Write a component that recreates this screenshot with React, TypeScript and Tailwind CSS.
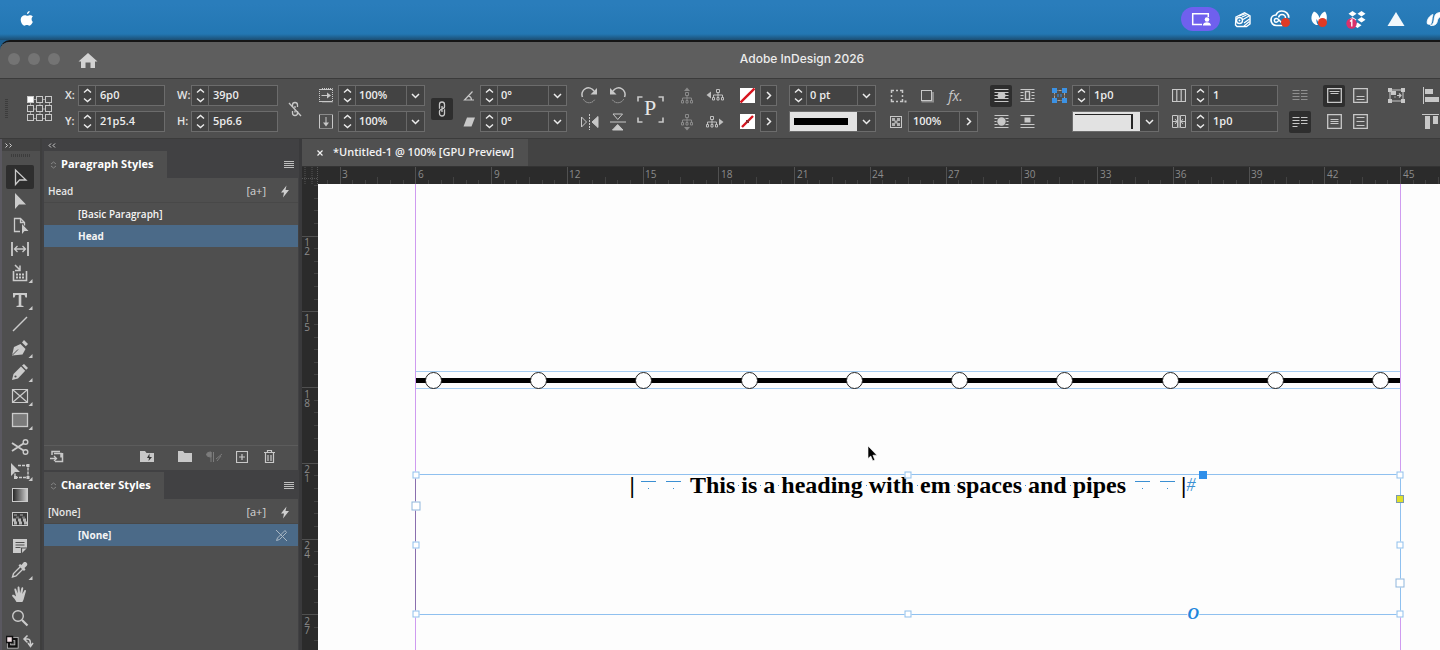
import React from "react";
import clsx from "clsx";

type Kids = { children?: React.ReactNode };

const SANS = "font-['Open_Sans','Noto_Sans',sans-serif]";
const SERIF = "font-['Liberation_Serif',serif]";

/* ---------- small building blocks ---------- */

const Glyph = ({ w, h, children, className }: Kids & { w: number; h: number; className?: string }) => (
  <svg
    width={w}
    height={h}
    viewBox={`0 0 ${w} ${h}`}
    fill="none"
    stroke="currentColor"
    className={clsx("shrink-0", className)}
    aria-hidden="true"
  >
    {children}
  </svg>
);

const IconButton = ({ label, active, className, children }: Kids & { label: string; active?: boolean; className?: string }) => (
  <button
    type="button"
    aria-label={label}
    className={clsx("flex shrink-0 items-center justify-center", active && "rounded-[2px] bg-[#2e2e2e]", className)}
  >
    {children}
  </button>
);

const Column = ({ className, children }: Kids & { className?: string }) => (
  <div className={clsx("flex shrink-0 flex-col gap-[5px]", className)}>{children}</div>
);

const Row = ({ className, children }: Kids & { className?: string }) => (
  <div className={clsx("flex h-[21px] items-center", className)}>{children}</div>
);

const Chevron = () => (
  <Glyph w={9} h={6}>
    <path d="M1 1l3.500 3.500L8 1" strokeWidth="1.500" />
  </Glyph>
);

const Stepper = ({ label }: { label: string }) => (
  <button type="button" aria-label={`Step ${label}`} className="flex w-[17px] shrink-0 items-center justify-center border-r border-[#686868]">
    <Glyph w={9} h={15}>
      <path d="M1 4.500l3.500-3 3.500 3M1 10.500l3.500 3 3.500-3" strokeWidth="1.400" />
    </Glyph>
  </button>
);

const fieldBox = "flex h-[21px] w-[87px] shrink-0 border border-[#6c6c6c] bg-[#434343] text-[11px] font-semibold text-[#ececec]";

const NumberField = ({ label, value }: { label: string; value: string }) => (
  <div className={fieldBox}>
    <Stepper label={label} />
    <input aria-label={label} defaultValue={value} className="w-0 grow bg-transparent pl-1 outline-none" />
  </div>
);

const ComboField = ({ label, value }: { label: string; value: string }) => (
  <div className={fieldBox}>
    <Stepper label={label} />
    <select aria-label={label} className="w-0 grow appearance-none bg-transparent pl-[3px] outline-none">
      <option>{value}</option>
    </select>
    <span className="flex w-[18px] shrink-0 items-center justify-center border-l border-[#686868]">
      <Chevron />
    </span>
  </div>
);

const Arrow = () => (
  <Glyph w={6} h={9}>
    <path d="M1 1l3.500 3.500L1 8" strokeWidth="1.500" />
  </Glyph>
);

/* ---------- menu bar ---------- */

const MenuBar = () => (
  <header className="flex h-10 shrink-0 items-center bg-linear-to-b from-[#2a7dbb] from-10% via-[#2377b3] via-85% to-[#1b4f74] text-white">
    <button type="button" aria-label="Apple menu" className="mb-1 ml-5">
      <svg width="14" height="17" viewBox="0 0 14 17" fill="white">
        <path d="M9.700 1c.1 1.500-1.300 3-2.700 3C6.800 2.500 8.200 1.200 9.700 1zM11.600 9c0-1.500 1.100-2.200 1.300-2.400-.8-1.200-2-1.400-2.500-1.400-1.300-.1-2.100.6-2.900.6s-1.600-.6-2.600-.6C2.800 5.300.7 6.800.7 9.600c0 2.900 2 6.100 3.700 6.100.9 0 1.300-.6 2.500-.6s1.500.6 2.500.6c1.400 0 2.900-2.200 3.500-3.900-.8-.4-1.300-1.400-1.300-2.800z" />
      </svg>
    </button>
    <div className="mb-[2px] ml-auto flex items-center">
      <button type="button" aria-label="Screen sharing" className="flex h-6 w-[39px] items-center justify-center rounded-full bg-[#6f60ee]">
        <Glyph w={20} h={15}>
          <path d="M11 12.500H1.700V1.700h15.600V5" strokeWidth="1.500" />
          <circle cx="16" cy="7.500" r="2.300" fill="white" stroke="none" />
          <path d="M11.800 13.500c0-4.500 8.200-4.500 8.200 0z" fill="white" stroke="none" />
        </Glyph>
      </button>
      <button type="button" aria-label="Radio" className="ml-[14px]">
        <Glyph w={18} h={17}>
          <path d="M2 6l8.500-4.300L16 5v8l-3.500 2.500H3L1.500 14z" strokeWidth="1.400" />
          <circle cx="5.500" cy="9.500" r="3" strokeWidth="1.400" />
          <circle cx="5.500" cy="9.500" r="1" fill="white" stroke="none" />
          <path d="M5 5l7-2.500M9 8.500L15 5M10 12l5.500-4M10 15l5.500-4.500M8 6l4.500-2" strokeWidth="1.300" />
        </Glyph>
      </button>
      <button type="button" aria-label="Creative Cloud" className="ml-[18px]">
        <Glyph w={22} h={18}>
          <path d="M6.500 15.500C3 15.500 1 13 1 10s2.200-5 5-5c1-2.500 3-4 5.800-4 4 0 7 2.800 7 6.700M6.500 15.500h6" strokeWidth="1.700" />
          <path d="M13 12.500c-2 0-3-1-4-2.500-1-1.300-2-1.800-3.200-1.500-2.200.5-1.800 3.800.4 3.700 1.300 0 2-.8 2.800-2M8.500 7.500C9 5.500 10.500 4.500 12 4.500c2 0 3.500 1.600 3.500 3.500" strokeWidth="1.500" />
          <circle cx="15.500" cy="12.500" r="4.500" fill="#e03a26" stroke="none" />
        </Glyph>
      </button>
      <button type="button" aria-label="Malwarebytes" className="ml-[18px]">
        <Glyph w={20} h={18}>
          <path
            d="M4 1.500c3 1 4.500 3.500 5.500 6.500 1-3 2.500-5.500 5.500-6.500 2.500 3 2.500 8.500 0 12.500h-3c.8-1.800.8-3.500.5-5-1 1.500-2 4-3 5.500-1-1.500-2-4-3-5.500-.3 2 0 4 1.500 6H6C0 12.500.5 5 4 1.500z"
            fill="white"
            stroke="none"
          />
          <circle cx="12.500" cy="12.500" r="4.500" fill="#e03a26" stroke="none" />
        </Glyph>
      </button>
      <button type="button" aria-label="Dropbox, 1 update" className="ml-4">
        <Glyph w={21} h={19}>
          <path d="M6.500 1l4 2.700-4 2.700-4-2.700zM15.500 1l4 2.700-4 2.700-4-2.700zM6.500 7l4 2.700-4 2.700-4-2.700zM15.500 7l4 2.700-4 2.700-4-2.700zM11.500 12.500l4 2.700-4 2.700-4-2.700z" fill="white" stroke="none" />
          <circle cx="5.500" cy="13.500" r="5.200" fill="#d9316c" stroke="none" />
          <path d="M4 11.500l1.800-1.500v6.500" strokeWidth="1.300" />
        </Glyph>
      </button>
      <button type="button" aria-label="Drive" className="ml-5">
        <Glyph w={18} h={16}>
          <path d="M9 1l8.500 14H.5z" fill="#f2f8fc" stroke="none" />
        </Glyph>
      </button>
      <button type="button" aria-label="Shortcuts" className="ml-[21px]">
        <Glyph w={14} h={16}>
          <path d="M1.500 13C0 9.500 3.500 4.500 7 3.500 5.500 7 6.500 11 4.500 13.500zM14 1.500C7 2 9 8 7.500 11.500 6.800 13 6 14 4.500 14.500 10 15 11 12 11.500 9.500c.3-2 1.500-3 2.500-3.500z" fill="white" stroke="white" strokeWidth="0.800" />
        </Glyph>
      </button>
    </div>
  </header>
);

const TitleBar = () => (
  <div className="flex h-9 shrink-0 items-center bg-[#5e5e5e] pb-[3px]">
    <div className="ml-2 flex gap-2">
      {["Close", "Minimise", "Zoom"].map((name) => (
        <button key={name} type="button" aria-label={name} className="size-3 rounded-full bg-[#747474]" />
      ))}
    </div>
    <button type="button" aria-label="Home" className="mt-1 ml-[18px] text-[#d2d2d2]">
      <Glyph w={20} h={17}>
        <path d="M10 1l9.500 8.500H17V16h-4.500v-5.500h-5V16H3V9.500H.5z" fill="currentColor" stroke="none" />
      </Glyph>
    </button>
    <h1 className="ml-[66px] grow text-center font-['Inter',sans-serif] text-[12px] font-medium text-[#ececec]">Adobe InDesign 2026</h1>
  </div>
);

/* ---------- control strip ---------- */

const ReferencePoint = () => (
  <IconButton label="Reference point" className="ml-[19px] self-center">
    <Glyph w={26} h={26}>
      <path d="M3.500 3.500h19v19h-19zM13 3v20M3 13h20" opacity="0.700" />
      {[0, 1, 2].flatMap((r) =>
        [0, 1, 2].map((c) => (
          <rect
            key={`${r}${c}`}
            x={c * 9 + 0.5}
            y={r * 9 + 0.5}
            width="6"
            height="6"
            fill={r + c === 0 ? "white" : "#4f4f4f"}
          />
        ))
      )}
    </Glyph>
  </IconButton>
);

const Tree = ({ dir }: { dir: "up" | "down" | "left" | "right" }) => {
  const vertical = dir === "up" || dir === "down";
  const head = {
    up: "M4 4l3-3.500L10 4z",
    down: "M4 14l3 3.500 3-3.500z",
    left: "M5 4.500L.5 8 5 11.500z",
    right: "M13 5.500L17.500 9 13 12.500z",
  }[dir];
  const shift = { up: "translate(0 4)", down: "translate(0 0)", left: "translate(5 1)", right: "translate(-1 2)" }[dir];
  return (
    <Glyph w={vertical ? 14 : 18} h={18} className={vertical ? "text-[#8a8a8a]" : "text-[#c0c0c0]"}>
      <g transform={shift}>
        <path d="M5.500 1.500h3v3h-3zM7 4.500v5M2.500 9V7h9v2M1.500 9.500h2v2.500h-2zM6 9.500h2v2.500H6zM10.500 9.500h2v2.500h-2z" />
      </g>
      <path d={head} fill="currentColor" stroke="none" />
    </Glyph>
  );
};

const NoneSwatch = ({ label, small }: { label: string; small?: boolean }) => (
  <Row className="gap-[5px]">
    <IconButton label={label}>
      <Glyph w={15} h={15}>
        <rect width="15" height="15" fill="white" stroke="none" />
        <path d={small ? "M2 13l11-11" : "M.5 14.500l14-14"} stroke="#d7141e" strokeWidth="2.400" />
        {small && <rect x="6" y="6" width="3" height="3" fill="#8c2a30" stroke="none" />}
      </Glyph>
    </IconButton>
    <IconButton label={`${label} options`} className="h-[21px] w-[17px] border border-[#6c6c6c] bg-[#434343] text-[#ececec]">
      <Arrow />
    </IconButton>
  </Row>
);

const ControlStrip = () => (
  <section
    aria-label="Control"
    className="flex shrink-0 overflow-hidden border-y border-[#3b3b3b] bg-[#4f4f4f] pt-[6px] pb-[5px] text-[#c8c8c8]"
  >
    <div className="ml-[5px] h-5 w-[3px] shrink-0 self-center bg-[repeating-linear-gradient(#3c3c3c_0_1px,transparent_1px_2px)]" />
    <ReferencePoint />

    <Column className="ml-3 text-[11px] font-semibold text-[#e4e4e4]">
      <Row>
        <span className="w-[13px]">X:</span>
        <NumberField label="X" value="6p0" />
      </Row>
      <Row>
        <span className="w-[13px]">Y:</span>
        <NumberField label="Y" value="21p5.4" />
      </Row>
    </Column>
    <Column className="ml-3 text-[11px] font-semibold text-[#e4e4e4]">
      <Row>
        <span className="w-[14px]">W:</span>
        <NumberField label="W" value="39p0" />
      </Row>
      <Row>
        <span className="w-[14px]">H:</span>
        <NumberField label="H" value="5p6.6" />
      </Row>
    </Column>

    <IconButton label="Constrain proportions" className="ml-[10px] self-center">
      <Glyph w={14} h={18}>
        <path d="M4.500 7V5a2.500 2.500 0 0 1 5 0v2M4.500 11v2a2.500 2.500 0 0 0 5 0v-2M7 6v2M7 10.500v2" strokeWidth="1.300" />
        <path d="M1 3l12 13" strokeWidth="1.300" />
      </Glyph>
    </IconButton>

    <Column className="ml-[17px]">
      <Row className="gap-[5px]">
        <Glyph w={14} h={15}>
          <path d="M.5 1v13M3 .5h10.500v13.500H3" strokeDasharray="1 1" />
          <path d="M.5 1.500h13M.5 13.500h13M2.500 7.500h8" />
          <path d="M8 4.500l4 3-4 3z" fill="currentColor" stroke="none" />
        </Glyph>
        <ComboField label="Scale X" value="100%" />
      </Row>
      <Row className="gap-[5px]">
        <Glyph w={14} h={15}>
          <path d="M.5 .5h13M.5 14.500h13" strokeDasharray="1 1" />
          <path d="M.5 1v13M13.500 1v13M7 3v7" />
          <path d="M4 8.500l3 4 3-4z" fill="currentColor" stroke="none" />
        </Glyph>
        <ComboField label="Scale Y" value="100%" />
      </Row>
    </Column>

    <IconButton label="Link scale" active className="ml-1.5 h-[22px] w-[22px] self-center">
      <Glyph w={10} h={16}>
        <path d="M3 7H2.500V3.500a2.500 2.500 0 0 1 5 0v2a2 2 0 0 1-2 2M7 9h.5v3.500a2.500 2.500 0 0 1-5 0v-2a2 2 0 0 1 2-2M5 5v6" strokeWidth="1.300" />
      </Glyph>
    </IconButton>

    <Column className="ml-[10px]">
      <Row className="gap-[5px]">
        <Glyph w={12} h={12}>
          <path d="M9.500 1.500L1.500 10H11M5.500 6c2 .5 3 2 3 4" strokeWidth="1.200" />
        </Glyph>
        <ComboField label="Rotation" value="0°" />
      </Row>
      <Row className="gap-[5px]">
        <Glyph w={12} h={10}>
          <path d="M4 .5h8L8.500 9.500H.5z" fill="currentColor" stroke="none" />
        </Glyph>
        <ComboField label="Shear" value="0°" />
      </Row>
    </Column>

    <Column className="ml-[14px]">
      <Row className="gap-[10px]">
        <IconButton label="Rotate 90° clockwise">
          <Glyph w={18} h={17}>
            <path d="M1.500 10a6.500 6.500 0 0 1 11.500-6" strokeWidth="1.500" />
            <path d="M2.500 12.500a6.500 6.500 0 0 0 11.500-.5" strokeDasharray="1 1" />
            <path d="M16 1v6.500H9.500z" fill="currentColor" stroke="none" />
          </Glyph>
        </IconButton>
        <IconButton label="Rotate 90° anticlockwise">
          <Glyph w={17} h={17}>
            <path d="M15.500 10A6.500 6.500 0 0 0 4 4" strokeWidth="1.500" />
            <path d="M14.500 12.500A6.500 6.500 0 0 1 3 12" strokeDasharray="1 1" />
            <path d="M1 1v6.500h6.500z" fill="currentColor" stroke="none" />
          </Glyph>
        </IconButton>
      </Row>
      <Row className="gap-[10px]">
        <IconButton label="Flip horizontal">
          <Glyph w={18} h={16}>
            <path d="M.5 3v10l5-5z" />
            <path d="M8.500 0v16" strokeDasharray="2 1" />
            <path d="M17 2.500v11L11 8z" fill="currentColor" />
          </Glyph>
        </IconButton>
        <IconButton label="Flip vertical">
          <Glyph w={17} h={18}>
            <path d="M4 1h9.500L8.800 6.500z" />
            <path d="M1 9h16" />
            <path d="M3.500 17l5.200-5.500L14 17z" fill="currentColor" />
          </Glyph>
        </IconButton>
      </Row>
    </Column>

    <IconButton label="Paragraph object" className="ml-[11px] self-center">
      <Glyph w={27} h={27}>
        <path d="M1 5.500V1h4.500M21.500 1H26v4.500M26 21.500V26h-4.500M5.500 26H1v-4.500" strokeWidth="1.600" />
        <text x="13" y="19" textAnchor="middle" fontSize="22" fill="#e6e6e6" stroke="none" fontFamily="Liberation Serif, serif">
          P
        </text>
      </Glyph>
    </IconButton>

    <Column className="ml-4">
      <Row className="gap-3">
        <Tree dir="up" />
        <Tree dir="left" />
      </Row>
      <Row className="gap-3">
        <Tree dir="down" />
        <Tree dir="right" />
      </Row>
    </Column>

    <Column className="ml-4">
      <NoneSwatch label="Fill" />
      <NoneSwatch label="Stroke" small />
    </Column>

    <Column className="ml-3">
      <ComboField label="Stroke weight" value="0 pt" />
      <button type="button" aria-label="Stroke type" className={fieldBox}>
        <span className="flex h-full grow items-center bg-[#e2e2e2] px-1">
          <span className="h-[7px] w-[54px] bg-black" />
        </span>
        <span className="flex h-full w-[18px] items-center justify-center">
          <Chevron />
        </span>
      </button>
    </Column>

    <Column className="ml-[14px]">
      <Row className="gap-[13px]">
        <IconButton label="Corner shape">
          <Glyph w={17} h={14}>
            <path d="M1.500 4V1.500H4M6 1.500h2M10 1.500h2.500V4M12.500 6v2M12.500 10v2.500H10M8 12.500H6M4 12.500H1.500V10M1.500 8V6" strokeWidth="1.500" />
            <path d="M14.500 12.500h2" strokeWidth="2" />
          </Glyph>
        </IconButton>
        <IconButton label="Drop shadow">
          <Glyph w={14} h={14}>
            <path d="M1.500 12.500h11.500V3" stroke="#8d8d8d" strokeWidth="2" />
            <rect x="1.500" y="1.500" width="10" height="10" fill="#4f4f4f" />
          </Glyph>
        </IconButton>
        <button type="button" className="w-[17px] text-[14px] leading-4 italic">
          fx.
        </button>
      </Row>
      <Row className="gap-[6px]">
        <Glyph w={12} h={12}>
          <rect x="0.500" y="0.500" width="11" height="11" />
          <path d="M2 2h3v3H2zM7 2h3v3H7zM4.500 4.500h3v3h-3zM2 7h3v3H2zM7 7h3v3H7z" fill="currentColor" stroke="none" opacity="0.800" />
        </Glyph>
        <div className="flex h-[21px] w-[70px] border border-[#6c6c6c] bg-[#434343] text-[11px] font-semibold text-[#ececec]">
          <input aria-label="Opacity" defaultValue="100%" className="w-0 grow bg-transparent pl-1 outline-none" />
          <button type="button" aria-label="Opacity slider" className="flex w-[18px] items-center justify-center border-l border-[#686868]">
            <Arrow />
          </button>
        </div>
      </Row>
    </Column>

    <Column className="ml-3">
      <Row className="gap-[8px]">
        <IconButton label="No text wrap" active className="h-[22px] w-[22px]">
          <Glyph w={15} h={14}>
            <path d="M.5 .5h14M.5 3.500h14M.5 6.500h14M.5 9.500h14M.5 12.500h14" />
            <ellipse cx="7.500" cy="6.500" rx="4" ry="3.500" fill="currentColor" stroke="none" />
          </Glyph>
        </IconButton>
        <IconButton label="Wrap around bounding box">
          <Glyph w={15} h={14}>
            <path d="M.5 .5h14M.5 3.500h3M.5 6.500h3M.5 9.500h3M.5 12.500h14M11.500 3.500h3M11.500 6.500h3M11.500 9.500h3" />
            <path d="M5.500 2.500h4v8h-4z" strokeWidth="1.400" />
          </Glyph>
        </IconButton>
      </Row>
      <Row className="gap-[8px]">
        <IconButton label="Wrap around object shape" className="w-[22px]">
          <Glyph w={15} h={14}>
            <path d="M.5 .5h14M.5 3.500h3M.5 6.500h2M.5 9.500h3M.5 12.500h14M11.500 3.500h3M12.500 6.500h2M11.500 9.500h3" />
            <circle cx="7.500" cy="6.500" r="4.200" fill="currentColor" stroke="none" />
          </Glyph>
        </IconButton>
        <IconButton label="Jump object">
          <Glyph w={15} h={14}>
            <path d="M.5 .5h14M.5 9.500h14M.5 12.500h14" />
            <path d="M4.500 2.500h6v5h-6z" fill="currentColor" stroke="none" />
          </Glyph>
        </IconButton>
      </Row>
    </Column>

    <Column className="ml-[17px] items-end">
      <Row className="gap-[5px]">
        <Glyph w={15} h={15}>
          <rect x="2.500" y="2.500" width="10" height="10" stroke="#b0a090" strokeDasharray="3 1" />
          <path d="M0 0h5v5H0zM10 0h5v5h-5zM0 10h5v5H0zM10 10h5v5h-5z" fill="#3c92e4" stroke="none" />
          <path d="M5.500 7.500h4" stroke="#3c92e4" strokeWidth="3" strokeDasharray="1 2" />
        </Glyph>
        <NumberField label="Corner size" value="1p0" />
      </Row>
      <button type="button" aria-label="Corner style" className={fieldBox}>
        <span className="h-full grow bg-[#e2e2e2] pt-[2px] pr-[7px] pl-[2px]">
          <span className="block h-[15px] border-t border-r-2 border-[#262626]" />
        </span>
        <span className="flex h-full w-[18px] items-center justify-center">
          <Chevron />
        </span>
      </button>
    </Column>

    <Column className="ml-[13px]">
      <Row className="gap-[5px]">
        <Glyph w={14} h={13}>
          <path d="M.5 .5h13v12H.5zM4.800 .5v12M9.200 .5v12" strokeWidth="1.200" />
        </Glyph>
        <NumberField label="Columns" value="1" />
      </Row>
      <Row className="gap-[5px]">
        <Glyph w={14} h={13}>
          <path d="M.5 .5h5v12h-5zM8.500 .5h5v12h-5z" />
          <path d="M1 6.500h4M9 6.500h4M7 0v13M3 4l2 2.500L3 9M11 4L9 6.500 11 9" />
        </Glyph>
        <NumberField label="Gutter" value="1p0" />
      </Row>
    </Column>

    <Column className="ml-[11px]">
      <IconButton label="Unbalanced columns" className="h-[21px] w-[22px] text-[#8f8f8f]">
        <Glyph w={16} h={11}>
          <path d="M.5 .5h7M.5 3.500h7M.5 6.500h7M.5 9.500h7M9 .5h6.500M9 3.500h6.500M9 6.500h6.500M9 9.500h6.500" />
        </Glyph>
      </IconButton>
      <IconButton label="Balance columns" active className="h-[22px] w-[22px]">
        <Glyph w={16} h={11}>
          <path d="M.5 .5h7M.5 3.500h7M.5 6.500h7M.5 9.500h5M9 .5h6.500M9 3.500h6.500M9 6.500h6.500" />
        </Glyph>
      </IconButton>
    </Column>

    <Column className="ml-3">
      <Row className="gap-[8px]">
        <IconButton label="Align top" active className="h-[22px] w-[22px]">
          <Glyph w={15} h={15}>
            <path d="M.7 .7h13.600v13.600H.7z" strokeWidth="1.300" />
            <path d="M2.500 3.500h10M3.500 5.500h8" />
          </Glyph>
        </IconButton>
        <IconButton label="Align bottom">
          <Glyph w={15} h={15}>
            <path d="M.7 .7h13.600v13.600H.7z" strokeWidth="1.300" />
            <path d="M3.500 8.500h8M3.500 11.500h8" />
          </Glyph>
        </IconButton>
      </Row>
      <Row className="gap-[8px]">
        <IconButton label="Align centre" className="w-[22px]">
          <Glyph w={15} h={15}>
            <path d="M.7 .7h13.600v13.600H.7z" strokeWidth="1.300" />
            <path d="M3.500 5.500h8M3.500 7.500h8M3.500 9.500h8" />
          </Glyph>
        </IconButton>
        <IconButton label="Justify vertically">
          <Glyph w={15} h={15}>
            <path d="M.7 .7h13.600v13.600H.7z" strokeWidth="1.300" />
            <path d="M3.500 3.500h8M3.500 7.500h8M3.500 11.500h8" />
          </Glyph>
        </IconButton>
      </Row>
    </Column>

    <Column className="ml-5">
      <IconButton label="Frame fitting" className="h-[21px]">
        <Glyph w={17} h={15}>
          <path d="M2 2h13v11H2z" />
          <path d="M0 0h4v4H0zM13 0h4v4h-4zM0 11h4v4H0zM13 11h4v4h-4zM3 3h5v4H3z" fill="currentColor" stroke="none" />
          <path d="M9 7.500h4M7 9.500v-1M11 5.500l2 2-2 2" strokeWidth="1.200" />
        </Glyph>
      </IconButton>
    </Column>
    <Column className="ml-[17px]">
      <IconButton label="Align left edges" className="h-[21px]">
        <Glyph w={17} h={17}>
          <path d="M1.500 0v17" />
          <path d="M3 2h8v5H3zM3 10h14v5H3z" fill="currentColor" stroke="none" />
        </Glyph>
      </IconButton>
      <IconButton label="Align top edges" className="h-[21px]">
        <Glyph w={17} h={17}>
          <path d="M0 1.500h17" />
          <path d="M3 3h5v13H3zM11 3h5v8h-5z" fill="currentColor" stroke="none" />
        </Glyph>
      </IconButton>
    </Column>
  </section>
);

/* ---------- toolbox ---------- */

const corner = <path d="M26.500 18v4h-4z" fill="currentColor" stroke="none" />;

const tools: { name: string; art: React.ReactNode; gap?: boolean; sub?: boolean }[] = [
  { name: "Selection", art: <path d="M9.500 5v14.500l4-4.500h6.500z" strokeWidth="1.300" /> },
  { name: "Direct selection", art: <path d="M9 4v16l4-4.500h7z" fill="currentColor" stroke="none" /> },
  {
    name: "Page",
    art: (
      <>
        <path d="M14 18.500H8.500v-13h6l4 4v3M14.500 5.500v4h4" strokeWidth="1.300" />
        <path d="M16 11v10l2.500-3h4z" fill="currentColor" stroke="none" />
      </>
    ),
  },
  {
    name: "Gap",
    art: (
      <>
        <path d="M6 5v14M22 5v14" strokeWidth="1.800" />
        <path d="M8.500 12h11M11.500 9l-3 3 3 3M16.500 9l3 3-3 3" strokeWidth="1.300" />
      </>
    ),
  },
  {
    name: "Content collector",
    sub: true,
    art: (
      <>
        <path d="M7.500 10v9.500h13V10" strokeWidth="1.600" />
        <path d="M10 13.500h8M10 16.500h8" strokeDasharray="2 1" strokeWidth="2" />
        <path d="M9 4l4.500 4.500M14 4.500v5h-5" strokeWidth="1.500" />
      </>
    ),
  },
  {
    name: "Type",
    gap: true,
    sub: true,
    art: <path d="M7 5h14v4.500h-1.500L18.500 7h-3.200v10.500l2.200.5v1h-7v-1l2.200-.5V7H9.500l-1 2.500H7z" fill="currentColor" stroke="none" />,
  },
  { name: "Line", art: <path d="M7 19L21 5" strokeWidth="1.500" /> },
  {
    name: "Pen",
    sub: true,
    art: (
      <>
        <path d="M6 19.500l2-8.500 6.500-3 5 5-3 5.500z" fill="currentColor" stroke="none" />
        <path d="M6.500 19l5.500-5.500" stroke="#4f4f4f" />
        <path d="M16 6.500l2-2.500 4 4-2.200 2.200z" fill="currentColor" stroke="none" />
      </>
    ),
  },
  {
    name: "Pencil",
    sub: true,
    art: (
      <>
        <path d="M6 20l1.500-6 7.500-7.500 4.200 4.200L12 18.500z" fill="currentColor" stroke="none" />
        <path d="M16 5.500L18 4l4 4-1.800 1.800z" fill="currentColor" stroke="none" />
        <circle cx="9.500" cy="16.500" r="1.100" fill="#4f4f4f" stroke="none" />
      </>
    ),
  },
  { name: "Rectangle frame", sub: true, art: <path d="M6.500 5.500h15v13h-15zM6.500 5.500l15 13M21.500 5.500l-15 13" strokeWidth="1.200" /> },
  { name: "Rectangle", sub: true, art: <rect x="6.500" y="5.500" width="15" height="13" fill="#7b7b7b" strokeWidth="1.300" /> },
  {
    name: "Scissors",
    gap: true,
    art: (
      <>
        <circle cx="19.500" cy="7" r="2.300" strokeWidth="1.400" />
        <circle cx="19.500" cy="17" r="2.300" strokeWidth="1.400" />
        <path d="M17.500 8.500L6 16M17.500 15.500L6 8" strokeWidth="1.900" />
      </>
    ),
  },
  {
    name: "Free transform",
    sub: true,
    art: (
      <>
        <path d="M12 6.500h10v12H9v-5" strokeDasharray="3 1" strokeWidth="1.400" />
        <path d="M20.500 5h3v3h-3zM20.500 17h3v3h-3zM8 17h3v3H8z" fill="currentColor" stroke="none" />
        <path d="M5 4v13l4-4h5z" fill="currentColor" stroke="none" />
      </>
    ),
  },
  {
    name: "Gradient swatch",
    art: (
      <>
        <linearGradient id="swatch">
          <stop offset="0" stopColor="#222" />
          <stop offset="1" stopColor="#d0d0d0" />
        </linearGradient>
        <rect x="6.500" y="5.500" width="15" height="13" fill="url(#swatch)" />
      </>
    ),
  },
  {
    name: "Gradient feather",
    art: (
      <>
        <rect x="6.500" y="5.500" width="15" height="13" fill="#3c3c3c" />
        <path d="M8 8h12M10 10.500h9" strokeDasharray="3 3" strokeWidth="2" opacity="0.400" />
        <path d="M7 13h14M8 16h13" strokeDasharray="3 2" strokeWidth="2.800" opacity="0.850" />
      </>
    ),
  },
  {
    name: "Note",
    gap: true,
    art: (
      <>
        <path d="M7 5h14v9l-5 5H7z" fill="currentColor" stroke="none" />
        <path d="M9.500 8.500h9M9.500 11h9M9.500 13.500h5M15.500 19v-5h5.500" stroke="#4f4f4f" strokeWidth="1.200" />
      </>
    ),
  },
  {
    name: "Eyedropper",
    sub: true,
    art: (
      <>
        <path d="M14.500 8.500l-7 7-1 3.500 3.500-1 7-7" strokeWidth="1.400" />
        <path d="M12.500 7.500l1.500-1.500 1.500 1 2-2.500c2-1.500 5 1 3.300 3.300L18.500 10l1 1.500-1.500 1.500z" fill="currentColor" stroke="none" />
      </>
    ),
  },
  {
    name: "Hand",
    art: (
      <path
        d="M10.500 20c-1-2.200-3-4.500-4.200-5.800-.8-1.200.8-1.900 1.800-1.100l2 1.500-1.700-6.800c-.3-1.400 1.400-1.700 1.800-.5l1.500 4.300-.1-6c0-1.400 1.800-1.400 1.900 0l.6 5.600 1.300-5.200c.4-1.300 2.100-.8 1.800.5l-.9 5.600 2-3.600c.7-1.100 2.100-.3 1.600.8-1.200 3.200-1.700 8.200-3.500 10.700z"
        fill="currentColor"
        stroke="none"
      />
    ),
  },
  {
    name: "Zoom",
    art: (
      <>
        <circle cx="12" cy="10" r="5.300" strokeWidth="1.400" />
        <path d="M16 14l5.500 5.500" strokeWidth="2.200" />
      </>
    ),
  },
  {
    name: "Default fill and stroke",
    art: (
      <>
        <rect x="3" y="9" width="7.500" height="7.500" stroke="#cbcbcb" strokeWidth="4" />
        <rect x="3" y="9" width="7.500" height="7.500" stroke="#111" strokeWidth="2.500" />
        <rect x="0.500" y="6.500" width="6" height="6" fill="#f6e4e8" stroke="#111" strokeWidth="1.500" />
        <path d="M19 9h2.500c2.500 0 3 1.500 3 6M21.500 5.500L18 9l3.500 3.500M22 13l2.500 3.500L27 13" strokeWidth="1.500" />
      </>
    ),
  },
];

const Toolbox = () => (
  <aside className="flex w-[42px] shrink-0 flex-col border-x-2 border-r-[#3e3e3e] border-l-[#5a5860] bg-[#4f4f4f]">
    <div className="flex h-3 shrink-0 items-center bg-[#434343] pl-[3px] text-[#cfcfcf]">
      <Glyph w={8} h={5}>
        <path d="M.5 .5l2 2-2 2M4.500 .5l2 2-2 2" />
      </Glyph>
    </div>
    <div className="mx-auto mt-[3px] mb-2 h-[3px] w-5 shrink-0 bg-[repeating-linear-gradient(90deg,#3c3c3c_0_1px,transparent_1px_2px)]" />
    <nav aria-label="Tools" className="flex flex-col items-center pr-[2px] text-[#cbcbcb]">
      {tools.map((t, i) => (
        <IconButton key={t.name} label={t.name} active={i === 0} className={clsx("h-6 w-7", t.gap && "mt-[3px]")}>
          <Glyph w={28} h={24}>
            {t.art}
            {t.sub && corner}
          </Glyph>
        </IconButton>
      ))}
    </nav>
  </aside>
);

/* ---------- style panels ---------- */

const PanelTabs = ({ title }: { title: string }) => (
  <div className="flex h-[27px] shrink-0 bg-[#414143]">
    <button type="button" className="flex items-center gap-1 bg-[#4f4f4f] pr-[13px] pl-[6px] text-[11px] font-bold text-white">
      <Glyph w={7} h={8} className="text-[#858585]">
        <path d="M1 3l2.500-2L6 3M1 5l2.500 2L6 5" />
      </Glyph>
      {title}
    </button>
    <IconButton label={`${title} menu`} className="mr-1 ml-auto text-[#bdbdbd]">
      <Glyph w={10} h={9}>
        <path d="M0 1.500h10M0 3.500h10M0 5.500h10M0 7.500h10" />
      </Glyph>
    </IconButton>
  </div>
);

const CurrentStyle = ({ name }: { name: string }) => (
  <div className="flex h-6 shrink-0 items-center pt-[2px] pr-2 pl-1 text-[10px] font-semibold text-[#e6e6e6]">
    <span className="grow">{name}</span>
    <button type="button" aria-label="Style override highlighter" className="text-[11px] leading-4 font-normal text-[#d6d6d6]">
      [a+]
    </button>
    <IconButton label="Quick apply" className="ml-[14px] text-[#cfcfcf]">
      <Glyph w={10} h={13}>
        <path d="M6.500.5L1 7.500h3L3 12.500 9 5H5.500z" fill="currentColor" stroke="none" />
      </Glyph>
    </IconButton>
  </div>
);

const StyleItem = ({ name, selected, children }: Kids & { name: string; selected?: boolean }) => (
  <li>
    <button
      type="button"
      className={clsx(
        "flex h-[22px] w-full items-center pr-[10px] pl-[34px] text-[10px] text-[#f4f4f4]",
        selected ? "bg-[#4b6a88] font-bold" : "font-semibold"
      )}
    >
      <span className="grow text-left">{name}</span>
      {children}
    </button>
  </li>
);

const Panels = () => (
  <aside className="flex w-[260px] shrink-0 flex-col border-r-[3px] border-[#3a3a3c] bg-[#414143] pr-px pl-[2px]">
    <div className="flex h-3 shrink-0 items-center pl-1 text-[#cfcfcf]">
      <Glyph w={8} h={5}>
        <path d="M3 .5l-2 2 2 2M7 .5l-2 2 2 2" />
      </Glyph>
    </div>
    <section aria-label="Paragraph Styles" className="flex h-[319px] shrink-0 flex-col bg-[#4f4f4f]">
      <PanelTabs title="Paragraph Styles" />
      <CurrentStyle name="Head" />
      <ul className="grow border-t border-[#484848]">
        <StyleItem name="[Basic Paragraph]" />
        <StyleItem name="Head" selected />
      </ul>
      <div className="flex h-[25px] shrink-0 items-center border-t border-[#5c5c5c] pb-[3px] pl-[6px] text-[#c8c8c8]">
        <IconButton label="Load styles">
          <Glyph w={14} h={13}>
            <path d="M2 5V1.500h8M4 3.500h7v4M5 11.500h7.500V3" strokeWidth="1.500" />
            <path d="M0 8.500h6M4 6l2.500 2.500L4 11" strokeWidth="1.300" />
          </Glyph>
        </IconButton>
        <IconButton label="New style from Cloud library" className="ml-[76px]">
          <Glyph w={14} h={11}>
            <path d="M0 0h5l1.500 2H14v9H0z" fill="currentColor" stroke="none" />
            <path d="M9.500 2.500L7 7h2l-.5 3L12 6H9.500z" fill="#333" stroke="none" />
          </Glyph>
        </IconButton>
        <IconButton label="New style group" className="ml-[24px]">
          <Glyph w={14} h={11}>
            <path d="M0 0h5l1.500 2H14v9H0z" fill="currentColor" stroke="none" />
          </Glyph>
        </IconButton>
        <IconButton label="Clear overrides" className="ml-[14px] text-[#7c7c7c]">
          <Glyph w={17} h={12}>
            <path d="M5 1C-1 1-1 6 5 6z" fill="currentColor" />
            <path d="M5 1v10M7.500 1v10M10 8l6-5M11 10l4-5" />
          </Glyph>
        </IconButton>
        <IconButton label="New style" className="ml-[13px]">
          <Glyph w={12} h={12}>
            <path d="M.5 .5h11v11H.5zM6 3v6M3 6h6" strokeWidth="1.200" />
          </Glyph>
        </IconButton>
        <IconButton label="Delete style" className="ml-[16px]">
          <Glyph w={11} h={13}>
            <path d="M0 2.500h11M3.500 2V.5h4V2M1.500 3v9.500h8V3M4 5v6M7 5v6" strokeWidth="1.200" />
          </Glyph>
        </IconButton>
      </div>
    </section>
    <section aria-label="Character Styles" className="mt-[2px] flex grow flex-col bg-[#4f4f4f]">
      <PanelTabs title="Character Styles" />
      <CurrentStyle name="[None]" />
      <ul className="border-t border-[#484848]">
        <StyleItem name="[None]" selected>
          <Glyph w={13} h={13} className="text-[#a9b7c4]">
            <path d="M1 1l11 11M1.500 11.500l3-1 7-7-1.500-2-7.500 7.500z" />
          </Glyph>
        </StyleItem>
      </ul>
    </section>
  </aside>
);

/* ---------- document ---------- */

// three picas on screen take 75.75px, with a tick at every half pica
const picaStep = 75.75 / 6;
const steps = Array.from({ length: 112 }, (_, i) => i);

const HorizontalRuler = () => (
  <svg className="h-[17px] w-full shrink-0 bg-[#2b2b2b]" aria-label="Horizontal ruler">
    <path d="M3 0v17M15.500 0v17M0 11.500h16M10 0v17" stroke="#555" strokeDasharray="1 1" />
    {steps.map((i) => {
      const x = Math.round(37.500 + (i - 1) * picaStep) + 0.5;
      const major = (i - 1) % 6 === 0;
      if (x < 18) return null;
      return <path key={i} d={`M${x} ${major ? 0 : (i - 1) % 3 === 0 ? 10 : 13}V17`} stroke={major ? "#505050" : "#424242"} />;
    })}
    {Array.from({ length: 15 }, (_, n) => (
      <text key={n} x={Math.round(40 + n * 75.750)} y="11" fontSize="10" fill="#8c8c8c" fontFamily="Open Sans, sans-serif">
        {3 + n * 3}
      </text>
    ))}
  </svg>
);

const VerticalRuler = () => (
  <svg className="w-4 shrink-0 self-stretch bg-[#2b2b2b]" aria-label="Vertical ruler">
    {steps.slice(0, 60).map((i) => {
      const y = Math.round(51.500 + (i - 4) * picaStep) + 0.5;
      const major = (i - 4) % 6 === 0;
      return <path key={i} d={`M${major ? 0 : 12} ${y}H16`} stroke={major ? "#505050" : "#424242"} />;
    })}
    {Array.from({ length: 6 }, (_, n) => (
      <text key={n} fontSize="10" fill="#8c8c8c" textAnchor="middle" fontFamily="Open Sans, sans-serif">
        {String(12 + n * 3).split("").map((d, k) => (
          <tspan key={k} x="5" y={Math.round(62 + n * 75.750 + k * 9)}>
            {d}
          </tspan>
        ))}
      </text>
    ))}
  </svg>
);

const Handle = ({ className }: { className: string }) => (
  <span className={clsx("absolute -translate-x-1/2 -translate-y-1/2 border", className)} />
);

const handle = "size-[7px] border-[#8fbfec] bg-white";
const port = "size-[9px] border-[#8fb6dc] bg-white";

const EmSpaces = () => (
  <span className="mt-[6px] flex gap-[10px]">
    {[0, 1].map((n) => (
      <span key={n} className="flex w-[15px] flex-col items-center gap-[6px]">
        <span className="h-px w-full bg-[#3b8fd2]" />
        <span className="size-px bg-[#3b8fd2]" />
      </span>
    ))}
  </span>
);

const words = "This is a heading with em spaces and pipes".split(" ");

const Artboard = () => (
  <main className="relative grow overflow-hidden bg-[#fdfdfd]">
    <div className="absolute inset-y-0 right-[39px] left-[97px] border-x border-[#cf9bf0]" />

    <div className="absolute top-[187px] right-[40px] left-[98px] flex h-[18px] items-center border-y border-[#a5cdf2]">
      <div className="flex h-[5px] w-full items-center justify-between bg-black pr-[11px] pl-[9px]">
        {Array.from({ length: 10 }, (_, i) => (
          <span key={i} className="size-[17px] rounded-full border border-[#222] bg-white" />
        ))}
      </div>
    </div>

    <div className="absolute top-[290px] right-[39px] left-[97px] h-[141px] border border-[#8fc0ef] border-l-[#8a6fae]">
      <h2
        className={clsx(
          SERIF,
          "flex h-[25px] items-start justify-center text-[24px] leading-[20px] font-bold whitespace-nowrap text-black"
        )}
      >
        <span>|</span>
        <span className="ml-[6px]">
          <EmSpaces />
        </span>
        <span className="mx-[9px]">
          {words.map((w, i) => (
            <React.Fragment key={w}>
              {i > 0 && (
                <span className="relative">
                  {" "}
                  <i className="absolute top-1/2 left-1/2 size-px bg-[#3b8fd2]" />
                </span>
              )}
              {w}
            </React.Fragment>
          ))}
        </span>
        <EmSpaces />
        <span className="ml-[6px]">|</span>
        <span className="w-0 text-[18px] font-normal text-[#3b8fd2] italic">#</span>
      </h2>

      <Handle className={clsx(handle, "top-0 left-0")} />
      <Handle className={clsx(handle, "top-0 left-1/2")} />
      <Handle className="top-0 left-[80%] size-2 border-[#2f8fea] bg-[#2f8fea]" />
      <Handle className={clsx(handle, "top-0 left-full")} />
      <Handle className={clsx(port, "top-[31px] left-0")} />
      <Handle className={clsx(handle, "top-1/2 left-0")} />
      <Handle className="top-[24px] left-full size-2 border-[#7c9ab0] bg-[#dfe02a]" />
      <Handle className={clsx(handle, "top-1/2 left-full")} />
      <Handle className={clsx(port, "top-[108px] left-full")} />
      <Handle className={clsx(handle, "top-full left-0")} />
      <Handle className={clsx(handle, "top-full left-1/2")} />
      <Handle className={clsx(handle, "top-full left-full")} />
      <span
        className={clsx(
          SERIF,
          "absolute top-full left-[79%] -translate-x-1/2 -translate-y-1/2 bg-[#fdfdfd] text-[16px] leading-4 font-bold text-[#1f86dc] italic"
        )}
      >
        O
      </span>
    </div>

    <svg className="absolute top-[261px] left-[549px]" width="11" height="17" viewBox="0 0 11 17" aria-hidden="true">
      <path d="M1 1v12.500l2.800-2.500 2 4.800 2-.9L5.900 10.200h4z" fill="black" stroke="white" strokeWidth="0.600" />
    </svg>
  </main>
);

const DocumentWindow = () => (
  <div className="flex min-w-0 grow flex-col">
    <div className="flex h-7 shrink-0 border-b border-[#333] bg-[#434343]">
      <div className="flex items-center bg-[#505050] px-[14px] text-[11px] font-semibold text-[#f2f2f2]">
        <button type="button" aria-label="Close document" className="mr-[9px]">
          <Glyph w={8} h={8}>
            <path d="M1.500 1.500l5 5M6.500 1.500l-5 5" strokeWidth="1.200" />
          </Glyph>
        </button>
        *Untitled-1 @ 100% [GPU Preview]
      </div>
    </div>
    <HorizontalRuler />
    <div className="flex grow">
      <VerticalRuler />
      <Artboard />
    </div>
  </div>
);

export default function App() {
  return (
    <div className={clsx(SANS, "flex h-screen flex-col overflow-hidden bg-[#1d5f90]")}>
      <MenuBar />
      <div className="flex grow flex-col overflow-hidden rounded-tl-[10px] border-t-2 border-[#151515]">
        <TitleBar />
        <ControlStrip />
        <div className="flex min-h-0 grow">
          <Toolbox />
          <Panels />
          <DocumentWindow />
        </div>
      </div>
    </div>
  );
}
